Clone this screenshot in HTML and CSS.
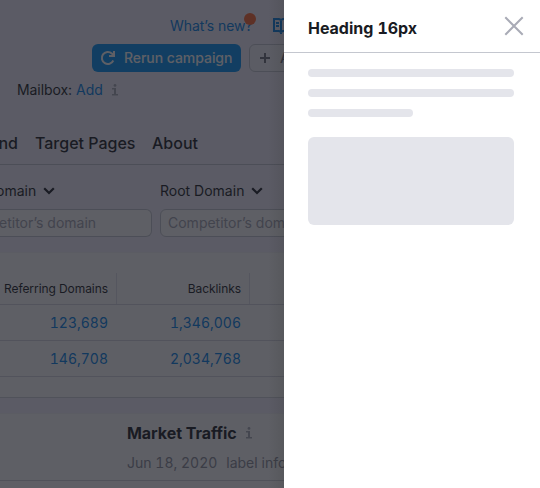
FILE: index.html
```html
<!DOCTYPE html>
<html lang="en">
<head>
<meta charset="utf-8">
<title>Campaign</title>
<link rel="stylesheet" href="styles.css">
</head>
<body>
<div class="app">
  <main class="page">
    <div class="topbar">
      <a class="link whatsnew"><span class="txt">What’s new?</span><i class="dot"></i></a>
      <svg class="book" width="16" height="16" viewBox="0 0 16 16" fill="none" stroke="currentColor" stroke-width="2"><path d="M8 2v14M1 1h5l2 1 2-1h5v12h-5l-2 1-2-1H1zM3 5h3M3 8h3"/></svg>
    </div>
    <div class="actions">
      <button class="btn primary"><svg width="16" height="16" viewBox="0 0 16 16" fill="none" stroke="currentColor" stroke-width="2"><path d="M13.300 10.500A6 6 0 1 1 11.800 3.400L13.500 5M14 1v5H9"/></svg><span class="txt">Rerun campaign</span></button>
      <button class="btn secondary"><svg width="16" height="16" viewBox="0 0 16 16" fill="none" stroke="currentColor" stroke-width="2"><path d="M8 3v10M3 8h10"/></svg><span>Add</span></button>
    </div>
    <div class="mailbox"><span>Mailbox:</span><a class="link">Add</a><svg class="info" width="8" height="12" viewBox="0 0 8 12" fill="currentColor"><circle cx="4" cy="1.4" r="1.4"/><path d="M1 4h4v6h2v1.600H1V10h2V5.600H1z"/></svg></div>
    <nav class="tabs"><span class="tab first">nd</span><span class="tab second">Target Pages</span><span class="tab">About</span></nav>
    <div class="filters">
      <div class="filter left">
        <div class="label"><span>omain</span><svg width="12" height="8" viewBox="0 0 12 8" fill="none" stroke="currentColor" stroke-width="2.2"><path d="M1.200 1.200 6 6l4.800-4.800"/></svg></div>
        <div class="input">etitor’s domain</div>
      </div>
      <div class="filter right">
        <div class="label"><span>Root Domain</span><svg width="12" height="8" viewBox="0 0 12 8" fill="none" stroke="currentColor" stroke-width="2.2"><path d="M1.200 1.200 6 6l4.800-4.800"/></svg></div>
        <div class="input">Competitor’s domain</div>
      </div>
    </div>
    <section class="panel table">
      <div class="row head"><span class="cell">Referring Domains</span><span class="cell">Backlinks</span></div>
      <div class="row"><span class="cell">123,689</span><span class="cell">1,346,006</span></div>
      <div class="row"><span class="cell">146,708</span><span class="cell">2,034,768</span></div>
    </section>
    <section class="panel traffic">
      <div class="title"><b>Market Traffic</b><svg class="info" width="8" height="12" viewBox="0 0 8 12" fill="currentColor"><circle cx="4" cy="1.400" r="1.400"/><path d="M1 4h4v6h2v1.600H1V10h2V5.600H1z"/></svg></div>
      <div class="meta"><span class="date">Jun 18, 2020</span><span>label info</span></div>
    </section>
    <div class="overlay"></div>
  </main>
  <aside class="drawer">
    <header class="drawer-head"><h1>Heading 16px</h1><svg width="20" height="20" viewBox="0 0 20 20" fill="none" stroke="currentColor" stroke-width="2"><path d="M1.300 1.300l17.400 17.400M18.700 1.300 1.300 18.700"/></svg></header>
    <div class="drawer-body">
      <div class="bar"></div><div class="bar"></div><div class="bar short"></div>
      <div class="block"></div>
    </div>
  </aside>
</div>
</body>
</html>
```
FILE: styles.css
```css
* { box-sizing: border-box; }
body { margin: 0; font: 14px/20px Inter, "Liberation Sans", sans-serif; color: #191b23; }
svg { flex: none; }
.app { display: flex; width: 540px; height: 488px; overflow: hidden; }
.page { position: relative; width: 284px; flex: none; overflow: hidden; background: #f4f2fd; white-space: nowrap; }
.overlay { position: absolute; inset: 0; background: linear-gradient(to right, transparent 268px, rgba(25,27,15,.1)), rgba(25,27,35,.7); }
.link { color: #0080e8; }
.topbar { display: flex; align-items: center; height: 44px; padding: 8px 0 0 170px; }
.whatsnew { position: relative; width: 82px; letter-spacing: -.07px; }
.dot { position: absolute; left: 74px; top: -3px; width: 12px; height: 12px; border-radius: 50%; background: #ff642d; }
.book { margin-left: 21px; color: #0080e8; }
.actions { display: flex; gap: 8px; height: 28px; padding-left: 92px; }
.btn { display: flex; align-items: center; gap: 8px; height: 28px; padding: 0 8px; border: 0; border-radius: 6px; font: 500 14px/20px Inter, sans-serif; letter-spacing: -.05px; flex: none; }
.primary { width: 149px; background: #0092f5; color: #fff; }
.secondary { width: 80px; background: #f4f3fb; border: 1px solid #c4c7cf; color: #6c6e79; padding: 0 7px; gap: 7px; }
.mailbox { display: flex; align-items: center; height: 36px; padding-left: 17px; letter-spacing: -.07px; }
.mailbox .link { margin-left: 4px; }
.info { color: #a9abb6; margin-left: 8px; }
.tabs { display: flex; align-items: center; height: 57px; padding-top: 14px; border-bottom: 1px solid #c4c7cf; font-size: 16px; font-weight: 500; }
.first { width: 35px; flex: none; display: flex; justify-content: flex-end; padding-right: 17px; }
.second { width: 117px; flex: none; }
.filters { display: flex; gap: 8px; height: 87px; padding-top: 16px; }
.filter { flex: none; }
.left { width: 152px; }
.right { width: 180px; }
.label { display: flex; align-items: center; gap: 7px; height: 20px; }
.left .label { margin-left: -4px; }
.input { height: 28px; margin-top: 8px; padding: 3px 7px; border: 1px solid #c4c7cf; border-radius: 6px; background: #fff; color: #a2a4af; }
.left .input { border-left: 0; border-radius: 0 6px 6px 0; padding-left: 0; text-indent: -1px; }
.panel { background: #fff; border-top: 1px solid #f5f5f7; border-bottom: 1px solid #d0d2db; }
.table { height: 146px; padding-top: 20px; }
.row { display: flex; height: 36px; border-bottom: 1px solid #d5d7df; }
.cell { width: 133px; flex: none; padding: 8px 8px 0 0; text-align: right; color: #0080e8; font-variant-numeric: tabular-nums; }
.row .cell:first-child { width: 116px; }
.head { height: 32px; }
.head .cell { padding-top: 6px; font-size: 12px; color: #191b23; letter-spacing: -.06px; border-right: 1px solid #e0e1e9; }
.head .cell:first-child { width: 117px; padding-right: 8px; }
.traffic { height: 68px; margin-top: 15px; padding: 7px 0 0 127px; box-shadow: 0 10px #fff; }
.title { display: flex; align-items: center; height: 24px; font-size: 16px; }
.title b { font-weight: 700; letter-spacing: -.05px; }
.meta { display: flex; gap: 9px; margin-top: 8px; color: #8a8c98; }
.date { font-variant-numeric: tabular-nums; letter-spacing: 0; }
.drawer { width: 256px; flex: none; background: #fff; }
.drawer-head { display: flex; justify-content: space-between; height: 53px; padding: 16px 16px 0 24px; border-bottom: 1px solid #c4c7cf; color: #a9abb6; }
h1 { margin: 0; font-size: 16px; line-height: 24px; font-weight: 700; color: #191b23; font-variant-numeric: tabular-nums; letter-spacing: -.03px; }
.drawer-body { padding: 16px 26px 0 24px; }
.bar { height: 8px; margin-bottom: 12px; border-radius: 4px; background: #e4e5eb; }
.short { width: 105px; }
.block { height: 88px; margin-top: 20px; border-radius: 6px; background: #e4e5eb; }
```
